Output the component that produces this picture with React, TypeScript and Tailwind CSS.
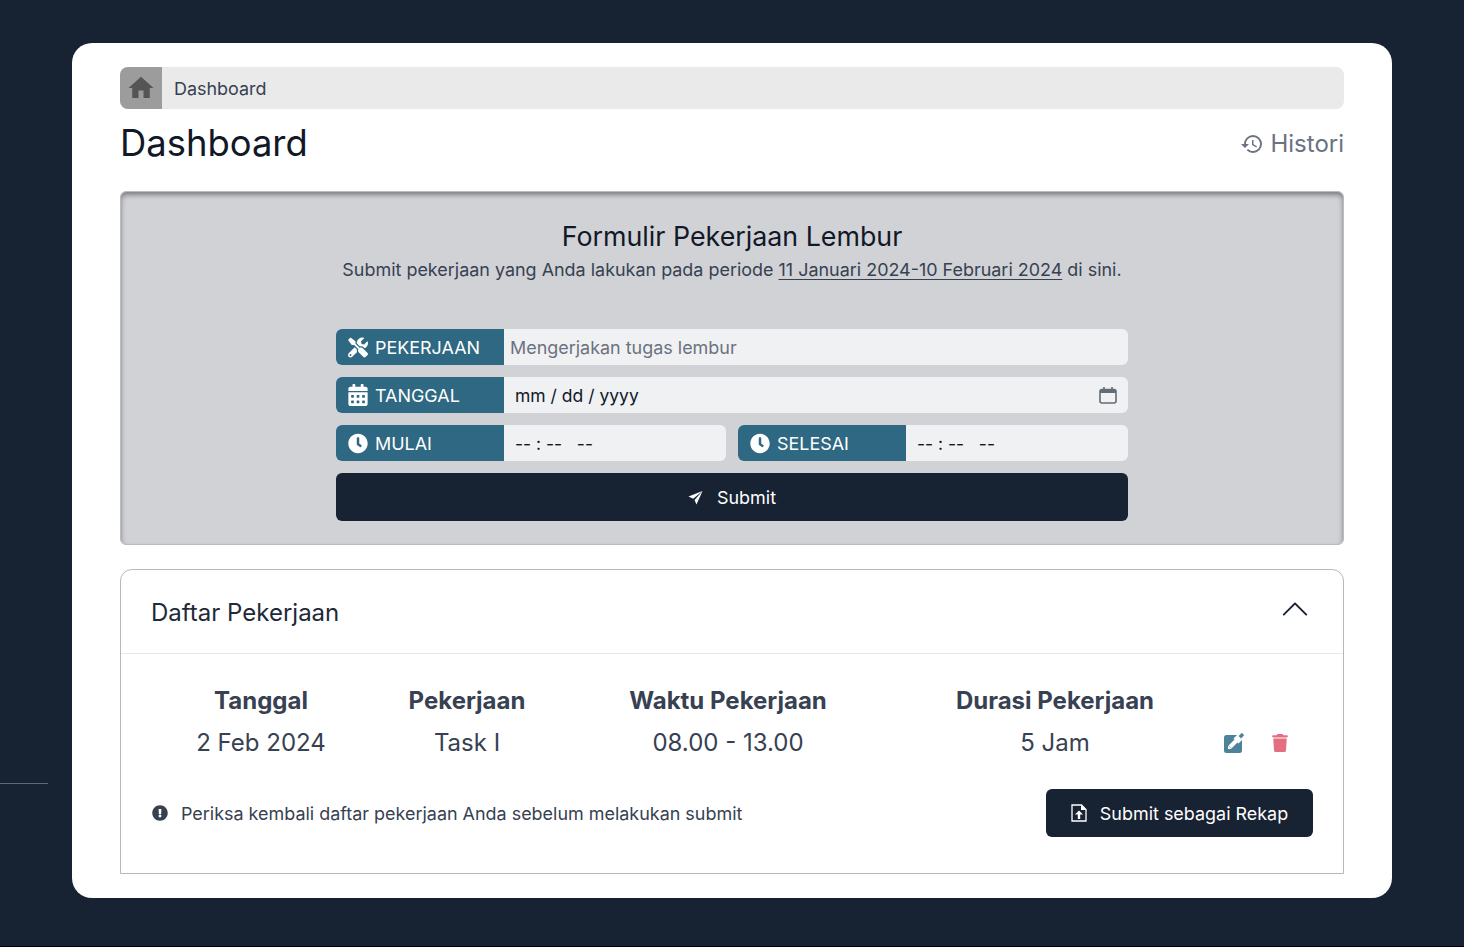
import { FaTools, FaCalendarAlt, FaClock, FaExclamationCircle } from "react-icons/fa";
import { FaTrash } from "react-icons/fa6";
import { MdHome, MdHistory } from "react-icons/md";
import { BsChevronUp } from "react-icons/bs";
import type { ReactNode } from "react";

function InputLabel({ icon, label }: { icon: ReactNode; label: string }) {
  return (
    <div className="w-[168px] h-9 shrink-0 bg-[#2e6882] text-white flex items-center pl-3 gap-[7px] text-[17.95px] rounded-l-md">
      <span className="w-5 flex justify-center shrink-0">{icon}</span>
      <span className="pt-[2px]">{label}</span>
    </div>
  );
}

function TimeField({ icon, label }: { icon: ReactNode; label: string }) {
  return (
    <div className="flex flex-1 h-9 rounded-md bg-[#f0f1f3]">
      <InputLabel icon={icon} label={label} />
      <div className="pl-[11px] pt-[2px] flex items-center text-[#111827] text-[17.5px] whitespace-pre">-- : --   --</div>
    </div>
  );
}

function CalendarGlyph() {
  return (
    <svg viewBox="0 0 18 18" width="18" height="18" className="text-[#636b77] -mt-px" aria-hidden="true">
      <path d="M1 5.5a2 2 0 0 1 2-2h12a2 2 0 0 1 2 2V7H1z" fill="currentColor" />
      <rect x="1" y="3.5" width="16" height="13.5" rx="2" fill="none" stroke="currentColor" strokeWidth="1.6" />
      <path d="M5 1v3M13 1v3" stroke="currentColor" strokeWidth="1.6" />
    </svg>
  );
}

function EditGlyph() {
  return (
    <svg viewBox="0 0 21 20" width="21" height="20" aria-hidden="true">
      <rect x="0" y="2" width="18" height="18" rx="2.5" fill="#4d8399" />
      <path d="M12 8 20 0" stroke="#ffffff" strokeWidth="7" />
      <path d="M6 14 13 7" stroke="#ffffff" strokeWidth="4" />
      <path d="M4 12.5V16h3.5z" fill="#ffffff" />
      <path d="M15.8 4.2 19 1" stroke="#4d8399" strokeWidth="3.4" />
    </svg>
  );
}

const columns = [
  { title: "Tanggal", value: "2 Feb 2024", cls: "w-[218px]" },
  { title: "Pekerjaan", value: "Task I", cls: "w-[194px]" },
  { title: "Waktu Pekerjaan", value: "08.00 - 13.00", cls: "w-[328px]" },
  { title: "Durasi Pekerjaan", value: "5 Jam", cls: "w-[326px]" },
];

export default function App() {
  return (
    <main className="relative h-[947px] bg-[#172232] pt-[43px] border-b border-black font-['Inter',sans-serif] overflow-hidden">
      <div className="absolute left-0 top-[783px] w-12 h-px bg-[#5d6775]" />
      <div className="mx-[72px] h-[855px] bg-white rounded-[20px] px-12 pt-6">
        <div className="h-[42px] bg-[#eaeaea] rounded-lg flex items-center overflow-hidden">
          <div className="w-[42px] h-full bg-[#9c9c9c] flex items-center justify-center text-[#555555]">
            <MdHome size={30} />
          </div>
          <span className="ml-3 pt-[2px] text-[17.95px] text-[#374151]">Dashboard</span>
        </div>

        <div className="flex items-center justify-between mt-3 h-[46px]">
          <h1 className="text-[36.4px] text-[#111827] -mt-[2px]">Dashboard</h1>
          <div className="flex items-center gap-[6px] text-[24px] text-[#6b7280]">
            <MdHistory size={24} />
            Histori
          </div>
        </div>

        <section className="mt-6 h-[354px] bg-[#d1d2d6] rounded-md border border-[#b9bbc0] shadow-[inset_0_3px_5px_rgba(0,0,0,0.4)] pt-[26px]">
          <h2 className="text-center text-[26.8px] leading-9 text-[#111827]">Formulir Pekerjaan Lembur</h2>
          <p className="text-center text-[17.95px] leading-[30px] text-[#374151] mt-px">
            Submit pekerjaan yang Anda lakukan pada periode{" "}
            <span className="underline underline-offset-[3px]">11 Januari 2024-10 Februari 2024</span> di sini.
          </p>

          <form className="w-[792px] mx-auto mt-[44px] flex flex-col gap-3">
            <div className="flex h-9 rounded-md bg-[#f0f1f3]">
              <InputLabel icon={<FaTools size={23} />} label="PEKERJAAN" />
              <div className="pl-[6px] pt-[2px] flex items-center text-[17.95px] text-[#6b7280]">Mengerjakan tugas lembur</div>
            </div>
            <div className="flex h-9 rounded-md bg-[#f0f1f3]">
              <InputLabel icon={<FaCalendarAlt size={22} />} label="TANGGAL" />
              <div className="flex-1 pl-[11px] pr-[11px] flex items-center justify-between text-[17.5px] text-[#111827]">
                <span className="pt-[2px]">mm / dd / yyyy</span>
                <CalendarGlyph />
              </div>
            </div>
            <div className="flex gap-3">
              <TimeField icon={<FaClock size={21} />} label="MULAI" />
              <TimeField icon={<FaClock size={21} />} label="SELESAI" />
            </div>
            <button type="button" className="h-12 rounded-md bg-[#172232] text-white text-[17.95px] flex items-center justify-center gap-[14px]">
              <svg viewBox="0 0 16 16" width="15" height="15" fill="currentColor" aria-hidden="true">
                <path d="M15.5 1 0.5 7 5.5 9.2 15.5 1 7 10.6 9 15.5Z" />
              </svg>
              <span className="pt-[2px]">Submit</span>
            </button>
          </form>
        </section>

        <section className="mt-6 h-[305px] rounded-t-xl border border-[#b8b8bb]">
          <div className="h-[84px] flex items-center justify-between pl-[30px] pr-[33px] border-b border-[#e5e7eb]">
            <h2 className="text-[24px] text-[#1f2937] mt-[2px]">Daftar Pekerjaan</h2>
            <BsChevronUp size={30} className="text-[#172232] -mt-[6px]" />
          </div>
          <div className="flex pl-[31px] pt-[29px]">
            {columns.map((c) => (
              <div key={c.title} className={`${c.cls} text-center text-[#374151]`}>
                <div className="text-[24px] font-bold leading-9">{c.title}</div>
                <div className="text-[24px] leading-9 mt-[6px]">{c.value}</div>
              </div>
            ))}
            <div className="flex items-center gap-[26px] mt-[42px] h-9 ml-[6px]">
              <EditGlyph />
              <FaTrash size={18} className="text-[#e56f82]" />
            </div>
          </div>
          <div className="flex items-center justify-between pl-[31px] pr-[30px] mt-7">
            <div className="flex items-center gap-[13px] text-[17.95px] text-[#374151]">
              <FaExclamationCircle size={16} />
              <span className="pt-[2px]">Periksa kembali daftar pekerjaan Anda sebelum melakukan submit</span>
            </div>
            <button type="button" className="w-[267px] h-12 rounded-md bg-[#172232] text-white text-[17.95px] flex items-center justify-center gap-[13px]">
              <svg viewBox="0 0 16 18" width="16" height="18" fill="none" stroke="currentColor" strokeWidth="1.3" aria-hidden="true">
                <path d="M1 1h9.5L15 5.5V17H1z" />
                <path d="M10 1v5h5z" fill="currentColor" stroke="none" />
                <path d="M8 6.5 4 10.5H6.8V15H9.2V10.5H12z" fill="currentColor" stroke="none" />
              </svg>
              <span className="pt-[2px]">Submit sebagai Rekap</span>
            </button>
          </div>
        </section>
      </div>
    </main>
  );
}
